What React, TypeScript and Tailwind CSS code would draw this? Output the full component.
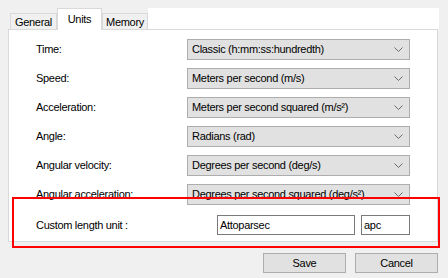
const rows = [
  { label: 'Time:', value: 'Classic (h:mm:ss:hundredth)' },
  { label: 'Speed:', value: 'Meters per second (m/s)' },
  { label: 'Acceleration:', value: 'Meters per second squared (m/s²)' },
  { label: 'Angle:', value: 'Radians (rad)' },
  { label: 'Angular velocity:', value: 'Degrees per second (deg/s)' },
  { label: 'Angular acceleration:', value: 'Degrees per second squared (deg/s²)' },
];

const Chevron = () => (
  <svg width="9" height="5" viewBox="0 0 9 5" className="shrink-0">
    <path d="M0.5 0.5 L4.5 4.5 L8.5 0.5" fill="none" stroke="#6d6d6d" strokeWidth="1" />
  </svg>
);

export default function App() {
  return (
    <div
      className="relative w-[448px] h-[278px] bg-[#f0f0f0] pt-[8px] text-[11px] tracking-[-0.3px] text-black leading-none"
      style={{ fontFamily: '"Liberation Sans", Arial, sans-serif' }}
    >
      {/* tab strip */}
      <div className="flex items-end h-[21px] ml-[10px] w-[429px]">
        <div className="flex items-center justify-center w-[47px] h-[16px] border border-b-0 border-[#d9d9d9] bg-[#f0f0f0] pt-[1px]">
          General
        </div>
        <div className="relative z-10 flex justify-center w-[45px] h-[22px] -mb-px border border-b-0 border-[#d9d9d9] bg-white pt-[5px]">
          Units
        </div>
        <div className="flex items-center justify-center w-[46px] h-[16px] border border-b-0 border-[#d9d9d9] bg-[#f0f0f0] pt-[1px]">
          Memory
        </div>
        <div className="flex-1 h-full bg-white" />
      </div>

      {/* panel */}
      <div className="ml-[8px] w-[430px] h-[213px] border border-[#d9d9d9] bg-white pt-[9px] pl-[27px] flex flex-col gap-[8px]">
        {rows.map((r) => (
          <div key={r.label} className="flex items-center h-[21px]">
            <div className="w-[151px]">{r.label}</div>
            <div className="w-[223px] h-[21px] border border-[#adadad] bg-[#e1e1e1] flex items-center justify-between pl-[4px] pr-[6px]">
              <span>{r.value}</span>
              <Chevron />
            </div>
          </div>
        ))}
        <div className="flex items-center h-[20px] mt-[2px]">
          <div className="w-[181px]">Custom length unit :</div>
          <div className="w-[138px] h-[20px] border border-[#7a7a7a] bg-white flex items-center pl-[2px]">
            Attoparsec
          </div>
          <div className="w-[49px] h-[20px] ml-[6px] border border-[#7a7a7a] bg-white flex items-center pl-[2px]">
            apc
          </div>
        </div>
      </div>

      {/* buttons */}
      <div className="flex justify-end gap-[9px] pr-[10px] mt-[11px]">
        <button className="w-[83px] h-[20px] border border-[#adadad] bg-[#e1e1e1] flex items-center justify-center">
          Save
        </button>
        <button className="w-[83px] h-[20px] border border-[#adadad] bg-[#e1e1e1] flex items-center justify-center">
          Cancel
        </button>
      </div>

      {/* red highlight */}
      <div className="absolute left-[12px] top-[197px] w-[428px] h-[51px] border-2 border-[#ff0000] pointer-events-none" />
    </div>
  );
}
